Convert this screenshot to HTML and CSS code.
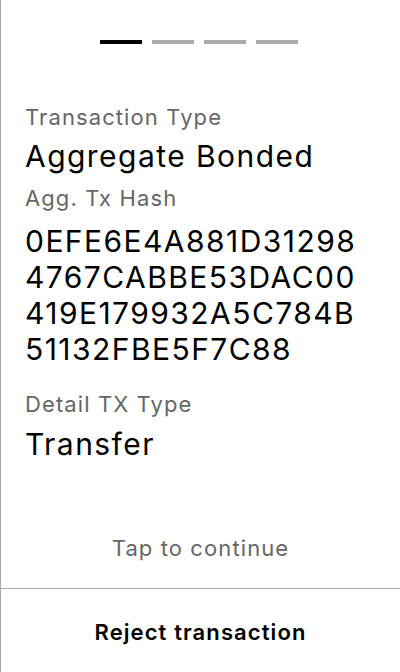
FILE: index.html
```html
<!DOCTYPE html>
<html>
<head>
<meta charset="utf-8">
<link rel="stylesheet" href="styles.css">
</head>
<body>
<div class="screen">
  <main class="main">
    <div class="steps">
      <span class="step step-active"></span>
      <span class="step"></span>
      <span class="step"></span>
      <span class="step"></span>
    </div>
    <section class="details">
      <div class="label label-first">Transaction Type</div>
      <div class="value value-first">Aggregate Bonded</div>
      <div class="label label-second">Agg. Tx Hash</div>
      <div class="value hash">0EFE6E4A881D31298<br>4767CABBE53DAC00<br>419E179932A5C784B<br>51132FBE5F7C88</div>
      <div class="label label-third">Detail TX Type</div>
      <div class="value value-third">Transfer</div>
    </section>
    <div class="tap">Tap to continue</div>
  </main>
  <footer class="footer">
    <button class="reject">Reject transaction</button>
  </footer>
</div>
</body>
</html>
```

FILE: styles.css
```css
* { box-sizing: border-box; }
html, body {
  margin: 0;
  padding: 0;
  background: #fff;
}
body {
  font-family: Inter, "Noto Sans", sans-serif;
  color: #000;
}
.screen {
  width: 400px;
  height: 672px;
  border-left: 1px solid #aaaaaa;
  display: flex;
  flex-direction: column;
}
.main {
  flex: 1;
  display: flex;
  flex-direction: column;
}
.steps {
  display: flex;
  justify-content: center;
  gap: 10px;
  padding-top: 40px;
  padding-right: 3px;
}
.step {
  width: 42px;
  height: 4px;
  background: #aaaaaa;
}
.step-active { background: #000; }
.details {
  padding: 0 24px;
  margin-top: 60px;
}
.label {
  font-size: 22px;
  line-height: 26px;
  letter-spacing: 1.1px;
  color: #666666;
}
.value {
  font-size: 30px;
  line-height: 36px;
  letter-spacing: 1.45px;
  color: #000;
}
.value-first { margin-top: 8px; }
.label-second { margin-top: 11px; }
.hash { margin-top: 12px; }
.label-third { margin-top: 24px; }
.value-third { margin-top: 9px; }
.tap {
  margin-top: auto;
  padding-bottom: 27px;
  text-align: center;
  font-size: 22px;
  line-height: 26px;
  letter-spacing: 1.1px;
  color: #666666;
}
.footer {
  height: 84px;
  border-top: 1px solid #aaaaaa;
  display: flex;
}
.reject {
  flex: 1;
  border: 0;
  background: transparent;
  font-family: Inter, "Noto Sans", sans-serif;
  letter-spacing: 1.1px;
  font-size: 22px;
  font-weight: 600;
  color: #000;
  padding: 3px 0 0;
}
```
